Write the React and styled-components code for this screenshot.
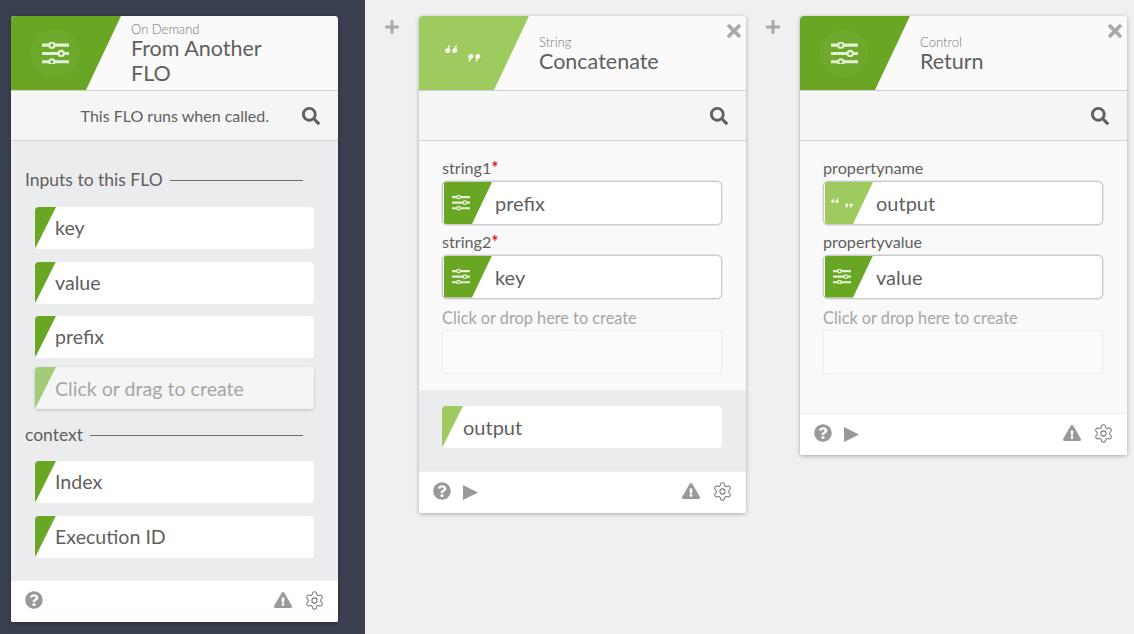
import React from 'react'
import styled, { createGlobalStyle } from 'styled-components'
import { FaQuestionCircle, FaExclamationTriangle, FaPlus, FaTimes, FaSearch } from 'react-icons/fa'
import { Settings } from 'lucide-react'

const GREEN = '#68a623'
const LIGHT = '#9ecb5f'

const Global = createGlobalStyle`
    html, body { margin: 0; padding: 0; background: #f0f0f0; }
    body { font-family: Lato, "Open Sans", sans-serif; color: #5f5f5f; }
    * { box-sizing: border-box; }
`
const Page = styled.div`
    display: flex;
    height: 634px;
    overflow: hidden;
`
const Sidebar = styled.div`
    width: 365px;
    flex: none;
    background: #3a404f;
    padding: 16px 27px 12px 11px;
    display: flex;
`
const Canvas = styled.div`
    flex: 1;
    display: flex;
    align-items: flex-start;
    padding: 16px 0 0 19px;
    gap: 19px;
`
const AddButton = styled.div`
    width: 16px;
    flex: none;
    margin-top: 3px;
    color: #a9a9a9;
    font-size: 16px;
    line-height: 0;
`
const Card = styled.div`
    position: relative;
    width: 327px;
    flex: none;
    display: flex;
    flex-direction: column;
    background: #fff;
    border-radius: 4px 4px 2px 2px;
    overflow: hidden;
    box-shadow: 0 1px 4px rgba(0, 0, 0, 0.3);
`
const Header = styled.div`
    height: 75px;
    display: flex;
    background: #fafafa;
    border-bottom: 1px solid #cfcfcf;
`
const Badge = styled.div`
    width: 110px;
    flex: none;
    display: flex;
    align-items: center;
    justify-content: center;
    padding-right: 22px;
    background: ${p => p.$color};
    clip-path: polygon(0 0, 100% 0, 75px 100%, 0 100%);
`
const BadgeCircle = styled.div`
    width: 48px;
    height: 48px;
    border-radius: 50%;
    display: flex;
    align-items: center;
    justify-content: center;
    background: ${p => p.$plain ? 'transparent' : 'rgba(255, 255, 255, 0.04)'};
`
const Titles = styled.div`
    margin-left: 10px;
    margin-top: 1px;
    align-self: center;
`
const Category = styled.div`
    font-size: 13px;
    line-height: 14px;
    padding-top: 1px;
    font-weight: 300;
    color: #777;
`
const Title = styled.div`
    font-size: 21.5px;
    line-height: 25px;
    width: 160px;
    color: #5f5f5f;
`
const CloseButton = styled.div`
    position: absolute;
    top: 5px;
    right: 2px;
    color: #a9a9a9;
    font-size: 20px;
    line-height: 0;
`
const SubHeader = styled.div`
    height: 50px;
    flex: none;
    display: flex;
    align-items: center;
    justify-content: flex-end;
    gap: 33px;
    padding-right: 18px;
    background: #f5f5f5;
    border-bottom: 1px solid #d2d2d2;
    font-size: 16px;
    color: #5f5f5f;
`
const InputsBody = styled.div`
    flex: 1;
    background: #ebecee;
    padding: 26px 24px 0 14px;
`
const SectionLabel = styled.div`
    display: flex;
    align-items: center;
    gap: 7px;
    height: 24px;
    margin-top: ${p => p.$top || 0}px;
    margin-bottom: ${p => p.$bottom}px;
    margin-right: 11px;
    font-size: 17.5px;
    color: #5f5f5f;
    &::after {
        content: '';
        flex: 1;
        height: 1px;
        margin-top: 2px;
        background: #6e6e6e;
    }
`
const Item = styled.div`
    position: relative;
    height: 42px;
    margin: ${p => p.$ghost ? '9px 0 0' : '12.5px 0 0'};
    margin-left: ${p => p.$flush ? 0 : 10}px;
    display: flex;
    align-items: center;
    padding-left: ${p => p.$flush ? 21 : 20}px;
    padding-bottom: ${p => p.$ghost ? 0 : 1}px;
    font-size: ${p => p.$flush ? 20 : 19.6}px;
    border-radius: 4px;
    overflow: hidden;
    color: ${p => p.$ghost ? '#a6a6a6' : '#5f5f5f'};
    background: ${p => p.$ghost ? '#f5f5f5' : '#fff'};
    width: ${p => p.$flush ? 280 : 279}px;
    &::before {
        content: '';
        position: absolute;
        left: 0;
        top: 0;
        width: 21px;
        height: 100%;
        background: ${p => p.$color || GREEN};
        clip-path: polygon(0 0, 100% 0, 0 100%);
    }
`
const GhostWrap = styled.div`
    margin: 9px 0 0 10px;
    width: 279px;
    border-radius: 4px;
    box-shadow: 0 1px 3px rgba(0, 0, 0, 0.2);
    & > div { margin: 0; }
`
const FieldsBody = styled.div`
    height: ${p => p.$height}px;
    flex: none;
    background: #f9f9f9;
    padding: 17px 24px 0 23px;
`
const FieldLabel = styled.div`
    font-size: ${p => p.$muted ? 16.3 : 16.2}px;
    line-height: 20px;
    margin-bottom: ${p => p.$muted ? 2 : 3}px;
    color: ${p => p.$muted ? '#a6a6a6' : '#5f5f5f'};
`
const Required = styled.span`
    color: #e0181c;
    font-weight: 700;
`
const Field = styled.div`
    margin-bottom: 6.5px;
    margin-top: ${p => p.$top || 0}px;
`
const Slot = styled.div`
    height: 44px;
    width: 280px;
    padding: 0 0 0 1px;
    display: flex;
    align-items: center;
    background: #fff;
    border: 1px solid #c9c9c9;
    border-radius: 5px;
    box-shadow: 0 0 0 0.5px #d8d8d8;
    overflow: hidden;
    font-size: 20px;
`
const EmptySlot = styled.div`
    height: 44px;
    width: 280px;
    background: #fbfbfb;
    border: 1px solid #eeeeee;
    border-radius: 2px;
`
const SlotBadge = styled.div`
    width: 48px;
    height: 100%;
    flex: none;
    margin-right: 3px;
    padding-right: 14px;
    display: flex;
    align-items: center;
    justify-content: center;
    background: ${p => p.$color};
    clip-path: polygon(0 0, 100% 0, 28px 100%, 0 100%);
`
const OutputBody = styled.div`
    height: 81px;
    flex: none;
    background: #ebecee;
    padding: 3.5px 0 0 23px;
`
const Footer = styled.div`
    height: 42px;
    flex: none;
    display: flex;
    align-items: center;
    gap: 12px;
    padding: 0 14px 3px;
    background: #fff;
    border-top: 1px solid #f0f0f0;
    color: #999;
    font-size: 18px;
`
const FooterSpacer = styled.div`
    flex: 1;
`
const FooterRight = styled.div`
    display: flex;
    align-items: center;
    gap: 12px;
    margin-right: -1px;
`
const IconBox = styled.span`
    display: inline-flex;
    line-height: 0;
    margin-top: ${p => p.$top || 0}px;
`

const SlidersIcon = ({ size = 27 }) => (
    <svg width={size} height={size * 0.85} viewBox="0 0 26 22" fill="none" stroke="#e6f0d8" strokeWidth="2">
        <path d="M0 3H7M12 3H26M0 11H16M21 11H26M0 19H7M12 19H26" strokeWidth="3" />
        <circle cx="9.5" cy="3" r="2.5" />
        <circle cx="18.5" cy="11" r="2.5" />
        <circle cx="9.5" cy="19" r="2.5" />
    </svg>
)

const Comma = ({ x, y, flip }) => (
    <path
        transform={`translate(${x} ${y})${flip ? ' rotate(180 2.5 4)' : ''}`}
        d="M2.6 8A2.4 2.4 0 1 1 2.4 3.2C2.6 1.8 3.4 .7 4.8 0L5.2 .7C4.4 1.4 4.2 2.2 4.4 3.4A2.6 2.6 0 0 1 2.6 8Z"
    />
)

const QuotesIcon = ({ scale = 1 }) => (
    <svg width={36 * scale} height={17 * scale} viewBox="0 0 36 17" fill="#f4f9ea">
        <Comma x={0} y={0} />
        <Comma x={7} y={0} />
        <Comma x={23.5} y={9} flip />
        <Comma x={30.5} y={9} flip />
    </svg>
)

const PlayIcon = () => (
    <svg width="15" height="15" viewBox="0 0 15 15" fill="#999">
        <polygon points="0,0 15,7.5 0,15" />
    </svg>
)

const CardFooter = ({ play }) => (
    <Footer>
        <IconBox><FaQuestionCircle /></IconBox>
        {play && <IconBox $top={3}><PlayIcon /></IconBox>}
        <FooterSpacer />
        <FooterRight>
            <IconBox><FaExclamationTriangle size={18} /></IconBox>
            <IconBox><Settings size={21} strokeWidth={1.15} color="#777" /></IconBox>
        </FooterRight>
    </Footer>
)

const CardHead = ({ color, icon, category, title, closable, plain }) => (
    <>
        <Header>
            <Badge $color={color}><BadgeCircle $plain={plain}>{icon}</BadgeCircle></Badge>
            <Titles>
                <Category>{category}</Category>
                <Title>{title}</Title>
            </Titles>
        </Header>
        {closable && <CloseButton><FaTimes /></CloseButton>}
    </>
)

const SearchBar = ({ children }) => (
    <SubHeader>
        {children}
        <IconBox><FaSearch size={18} color="#5f5f5f" /></IconBox>
    </SubHeader>
)

const FilledSlot = ({ label, required, value, light }) => (
    <Field>
        <FieldLabel>{label}{required && <Required>*</Required>}</FieldLabel>
        <Slot>
            <SlotBadge $color={light ? LIGHT : GREEN}>
                {light ? <QuotesIcon scale={0.62} /> : <SlidersIcon size={18} />}
            </SlotBadge>
            {value}
        </Slot>
    </Field>
)

const CreateSlot = () => (
    <Field $top={9.5}>
        <FieldLabel $muted>Click or drop here to create</FieldLabel>
        <EmptySlot />
    </Field>
)

export default function App() {
    return (
        <Page>
            <Global />
            <Sidebar>
                <Card>
                    <CardHead color={GREEN} icon={<SlidersIcon />} category="On Demand" title="From Another FLO" />
                    <SearchBar>This FLO runs when called.</SearchBar>
                    <InputsBody>
                        <SectionLabel $bottom={16}>Inputs to this FLO</SectionLabel>
                        <Item>key</Item>
                        <Item>value</Item>
                        <Item>prefix</Item>
                        <GhostWrap>
                            <Item $ghost $color="#a3cc78">Click or drag to create</Item>
                        </GhostWrap>
                        <SectionLabel $top={13} $bottom={15}>context</SectionLabel>
                        <Item>Index</Item>
                        <Item>Execution ID</Item>
                    </InputsBody>
                    <CardFooter />
                </Card>
            </Sidebar>
            <Canvas>
                <AddButton><FaPlus /></AddButton>
                <Card>
                    <CardHead color={LIGHT} plain icon={<QuotesIcon />} category="String" title="Concatenate" closable />
                    <SearchBar />
                    <FieldsBody $height={249}>
                        <FilledSlot label="string1" required value="prefix" />
                        <FilledSlot label="string2" required value="key" />
                        <CreateSlot />
                    </FieldsBody>
                    <OutputBody>
                        <Item $flush $color={LIGHT}>output</Item>
                    </OutputBody>
                    <CardFooter play />
                </Card>
                <AddButton><FaPlus /></AddButton>
                <Card>
                    <CardHead color={GREEN} icon={<SlidersIcon />} category="Control" title="Return" closable />
                    <SearchBar />
                    <FieldsBody $height={272}>
                        <FilledSlot label="propertyname" value="output" light />
                        <FilledSlot label="propertyvalue" value="value" />
                        <CreateSlot />
                    </FieldsBody>
                    <CardFooter play />
                </Card>
            </Canvas>
        </Page>
    )
}
